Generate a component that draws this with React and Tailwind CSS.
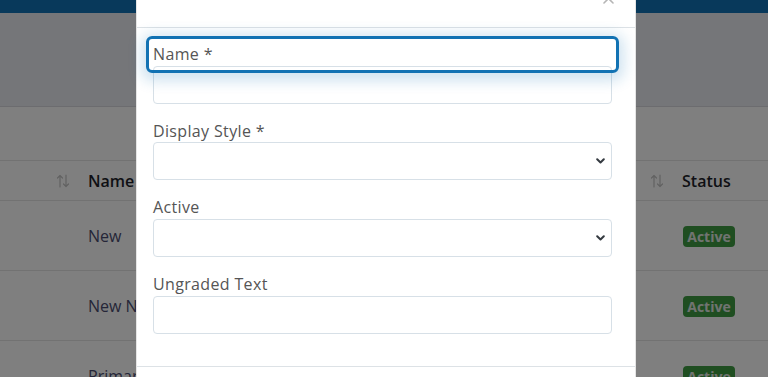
import React from "react";

const font = { fontFamily: '"Open Sans", "Noto Sans", sans-serif' };

function SortIcon() {
  return (
    <svg width="14" height="14" viewBox="0 0 14 14" fill="none" stroke="#c4c4c4" strokeWidth="1.2" strokeLinecap="round" strokeLinejoin="round">
      <path d="M4 13V1.5M1.5 4L4 1.5L6.5 4" />
      <path d="M10 1v11.5M7.5 10L10 12.5L12.5 10" />
    </svg>
  );
}

function Chevron() {
  return (
    <svg width="9" height="6" viewBox="0 0 9 6" fill="none" stroke="#343a40" strokeWidth="2" strokeLinecap="round" strokeLinejoin="round">
      <path d="M1.2 1.2L4.5 4.5L7.8 1.2" />
    </svg>
  );
}

function Row({ name, last }) {
  return (
    <div className={"flex h-[70px] items-center " + (last ? "" : "border-b border-[#e4e4e4]")}>
      <div className="w-[76px]" />
      <div className="flex-1 pl-3 text-[16px] text-[#4a4c70]">{name}</div>
      <div className="w-[98px] pl-[13px]">
        <span className="inline-flex h-[21px] w-[52px] items-center justify-center rounded-[4px] bg-[#3e9c43] text-[14px] font-bold text-[#e2e8e2]">
          Active
        </span>
      </div>
    </div>
  );
}

function Field({ label, focused, select }) {
  return (
    <div className="mb-4">
      <div className="relative block text-[16px] leading-[22.67px] tracking-[0.35px] text-[#555555]">
        {label}
        {focused ? (
          <div className="pointer-events-none absolute inset-[-7px] z-10 rounded-[6px] border-[3px] border-[#1272b3] shadow-[0_3px_14px_5px_rgba(18,114,179,0.2)]" />
        ) : null}
      </div>
      <div className="flex h-[38px] w-full items-center justify-end rounded-[4px] border border-[#d7e0e7] pr-[6px]">
        {select ? <Chevron /> : null}
      </div>
    </div>
  );
}

export default function App() {
  return (
    <div className="relative h-[377px] w-[768px] overflow-hidden bg-white" style={font}>
      {/* page behind */}
      <div className="h-[13px] bg-[#1072b6]" />
      <div className="h-[94px] border-b border-[#d8d9de] bg-[#eaedf3]" />
      <div className="h-[53px]" />
      <div className="flex h-[41px] items-center border-y border-[#e4e4e4]">
        <div className="flex w-[76px] justify-end pr-[6px]">
          <SortIcon />
        </div>
        <div className="flex flex-1 items-center justify-between pl-3 pr-[6px] text-[16px] font-semibold text-[#1e1f2a]">
          <span>Name</span>
          <SortIcon />
        </div>
        <div className="w-[98px] pl-3 text-[16px] font-semibold text-[#1e1f2a]">Status</div>
      </div>
      <Row name="New" />
      <Row name="New Name" />
      <Row name="Primary" last />

      {/* backdrop */}
      <div className="absolute inset-0 bg-black/50" />

      {/* modal */}
      <div className="absolute left-[136px] top-[-31px] h-[440px] w-[500px] border-x border-black/10 bg-white">
        <div className="flex h-[59px] items-center justify-end border-b border-[#dde2e6] pr-[21px]">
          <svg width="11" height="11" viewBox="0 0 11 11" stroke="#b5b5b5" strokeWidth="1.6" strokeLinecap="round">
            <path d="M1 1L10 10M10 1L1 10" />
          </svg>
        </div>
        <div className="pb-4 pl-4 pr-[23px] pt-[15px]">
          <Field label="Name *" focused />
          <Field label="Display Style *" select />
          <Field label="Active" select />
          <Field label="Ungraded Text" />
        </div>
        <div className="border-t border-[#dde2e6]" />
      </div>
    </div>
  );
}
